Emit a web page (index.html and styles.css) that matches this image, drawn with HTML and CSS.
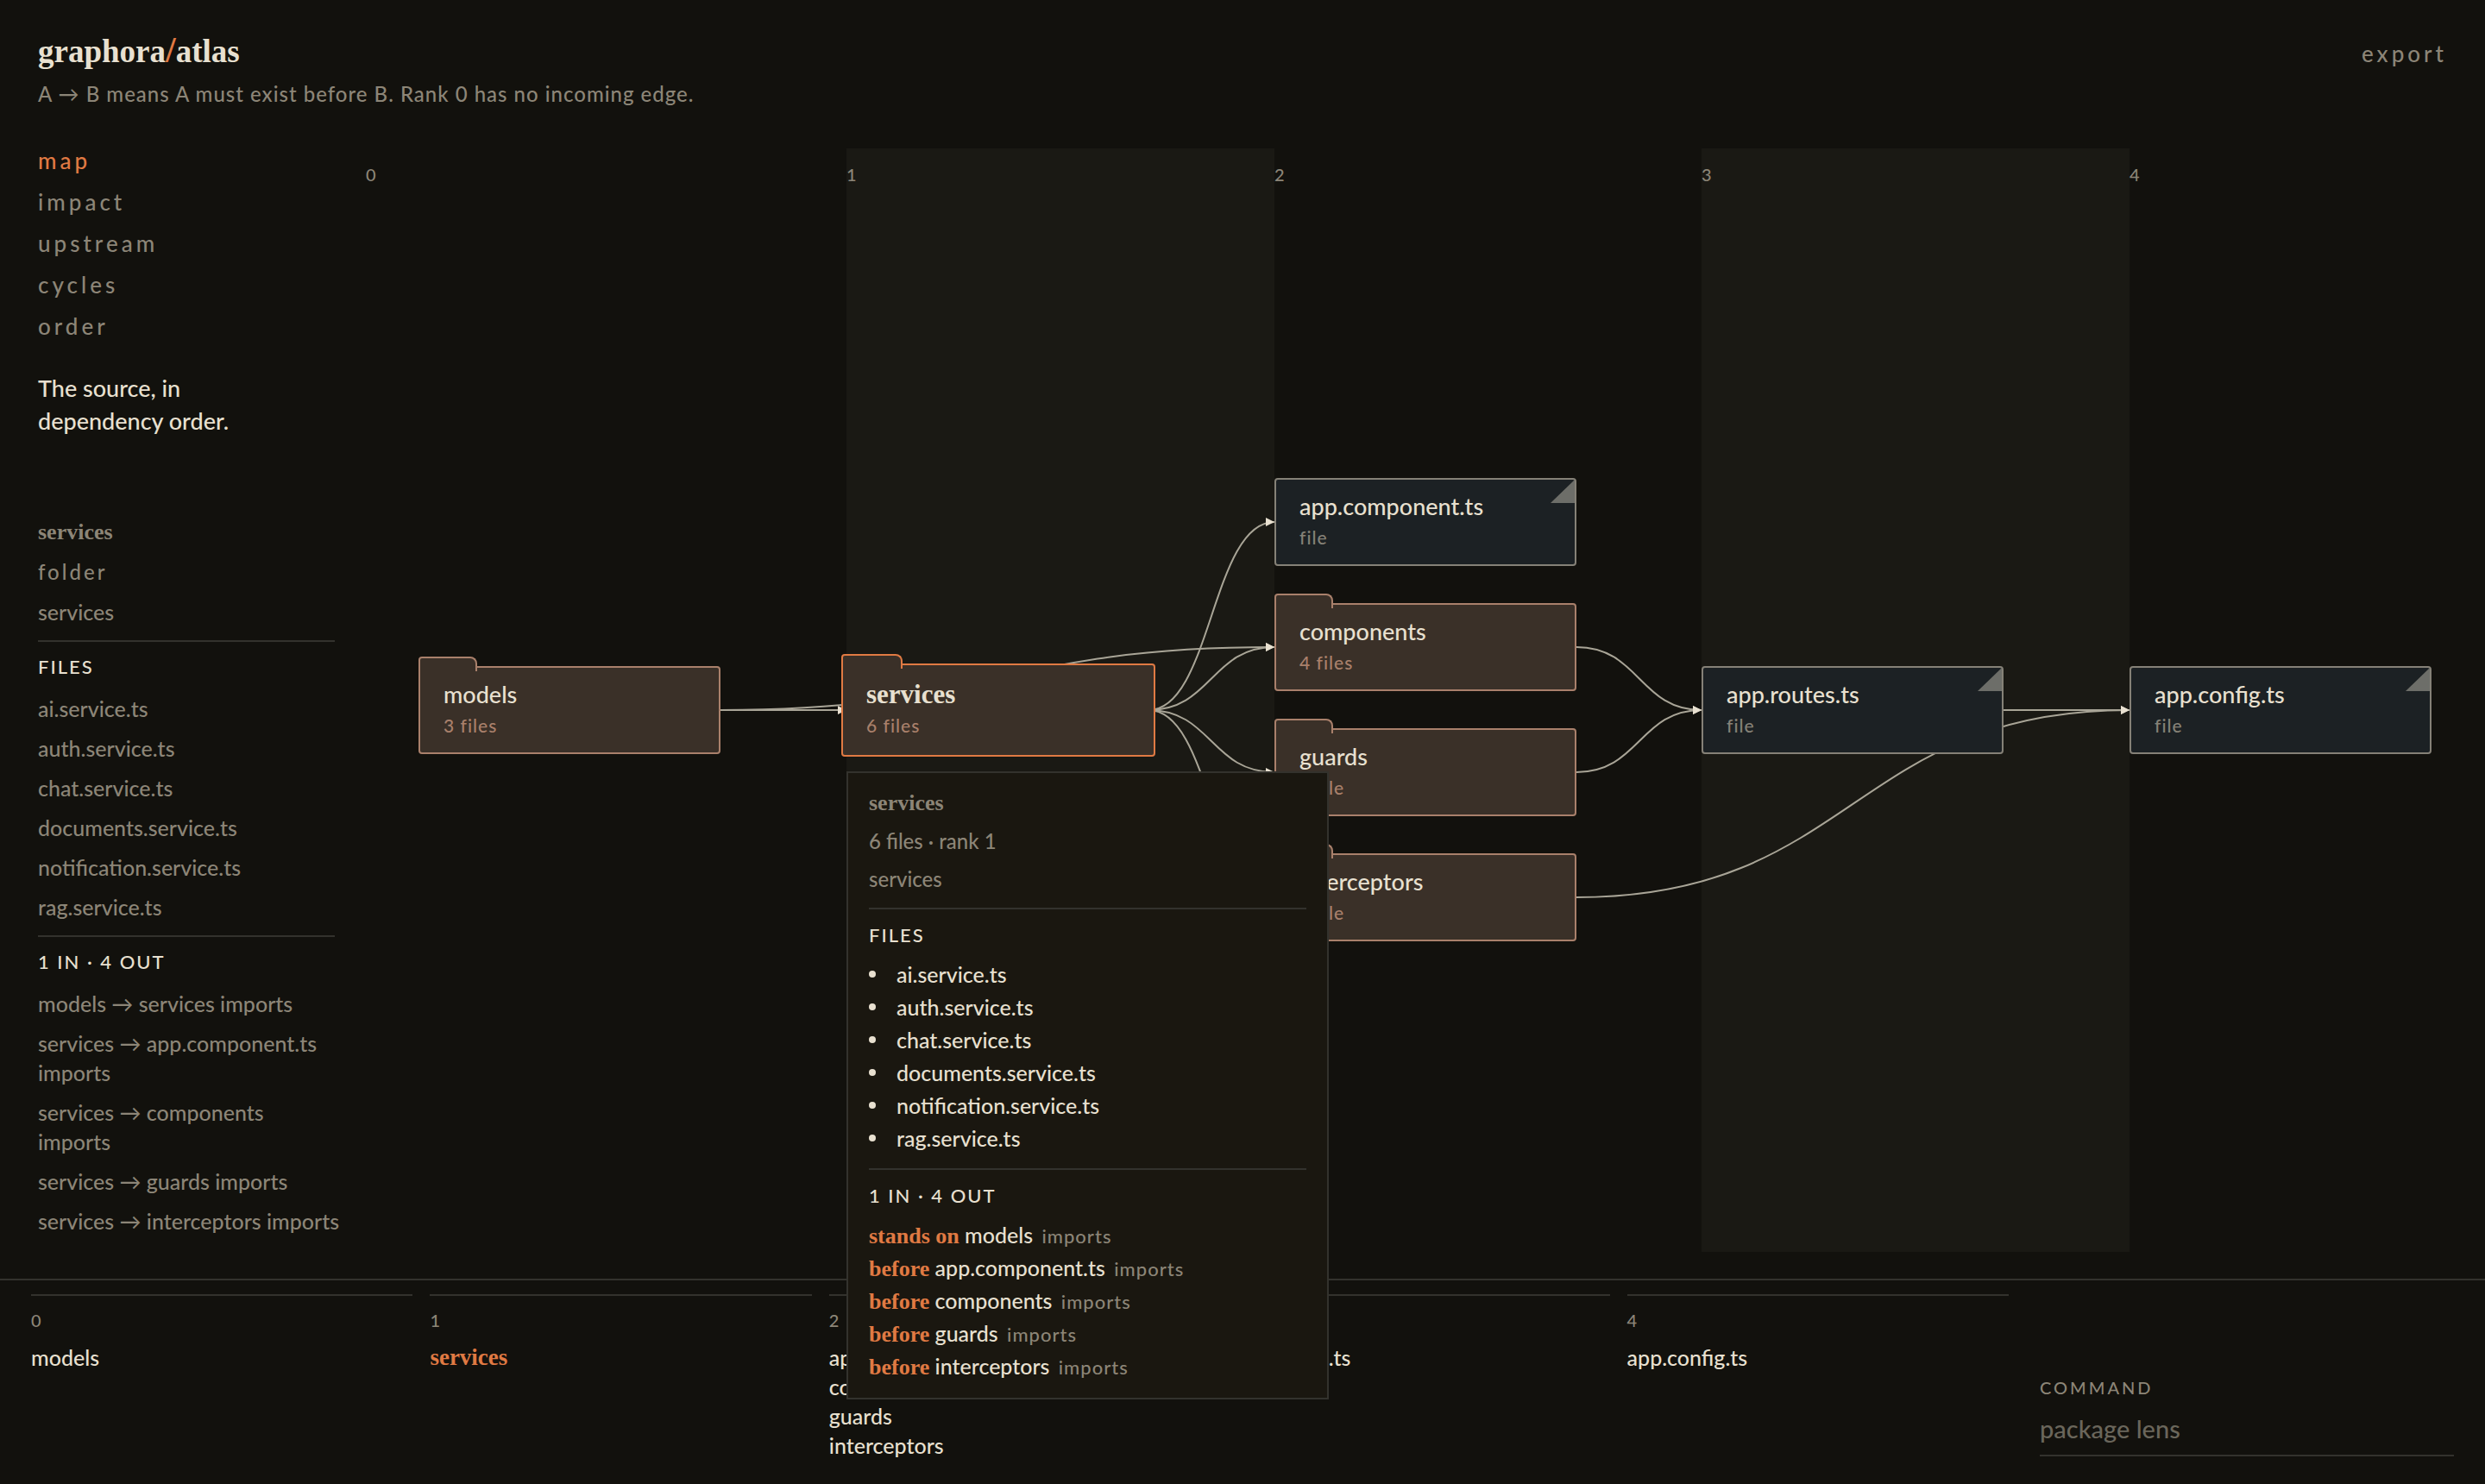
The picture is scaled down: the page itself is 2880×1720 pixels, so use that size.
FILE: index.html
```html
<!DOCTYPE html>
<html lang="en">
<head>
<meta charset="utf-8">
<meta name="viewport" content="width=device-width, initial-scale=1">
<title>graphora/atlas</title>
<link rel="stylesheet" href="styles.css">
</head>
<body>
<header class="header">
  <div>
    <h1 class="logo">graphora<span class="slash">/</span>atlas</h1>
    <p class="tagline">A → B means A must exist before B. Rank 0 has no incoming edge.</p>
  </div>
  <button class="text-button" type="button">export</button>
</header>

<main class="main">
  <aside class="sidebar">
    <nav class="nav">
      <button class="text-button active" type="button">map</button>
      <button class="text-button" type="button">impact</button>
      <button class="text-button" type="button">upstream</button>
      <button class="text-button" type="button">cycles</button>
      <button class="text-button" type="button">order</button>
    </nav>
    <p class="lead">The source, in<br>dependency order.</p>
    <section class="inspector">
      <div class="rows">
        <strong class="serif">services</strong>
        <span class="kind">folder</span>
        <span>services</span>
      </div>
      <div class="group">
        <h2 class="group-title">Files</h2>
        <div class="rows">
          <span>ai.service.ts</span>
          <span>auth.service.ts</span>
          <span>chat.service.ts</span>
          <span>documents.service.ts</span>
          <span>notification.service.ts</span>
          <span>rag.service.ts</span>
        </div>
      </div>
      <div class="group">
        <h2 class="group-title">1 in · 4 out</h2>
        <div class="rows">
          <span>models → services imports</span>
          <span>services → app.component.ts<br>imports</span>
          <span>services → components<br>imports</span>
          <span>services → guards imports</span>
          <span>services → interceptors imports</span>
        </div>
      </div>
    </section>
  </aside>

  <section class="canvas" aria-label="Dependency map">
    <div class="band band-1"></div>
    <div class="band band-3"></div>
    <span class="rank rank-0">0</span>
    <span class="rank rank-1">1</span>
    <span class="rank rank-2">2</span>
    <span class="rank rank-3">3</span>
    <span class="rank rank-4">4</span>

    <svg class="edges" width="2412" height="1279" viewBox="0 0 2412 1279" aria-hidden="true">
      <defs>
        <marker id="arrow" viewBox="0 0 10 10" refX="10" refY="5" markerWidth="10" markerHeight="10" markerUnits="userSpaceOnUse" orient="auto">
          <path class="arrowhead" d="M0 0L10 5L0 10z"/>
        </marker>
      </defs>
      <g class="lines">
        <path d="M411 651H557"/>
        <path d="M411 651C732 651 732 578 1053 578"/>
        <path d="M907 651C980 651 980 433 1053 433"/>
        <path d="M907 651C980 651 980 578 1053 578"/>
        <path d="M907 651C980 651 980 723 1053 723"/>
        <path d="M907 651C980 651 980 868 1053 868"/>
        <path d="M1403 578C1476 578 1476 651 1548 651"/>
        <path d="M1403 723C1476 723 1476 651 1548 651"/>
        <path d="M1403 868C1724 868 1724 651 2044 651"/>
        <path d="M1898 651H2044"/>
      </g>
    </svg>

    <button class="node folder at-models" type="button"><span class="name">models</span><span class="meta">3 files</span></button>
    <button class="node folder selected at-services" type="button"><span class="name">services</span><span class="meta">6 files</span></button>
    <button class="node file at-component" type="button"><span class="name">app.component.ts</span><span class="meta">file</span></button>
    <button class="node folder at-components" type="button"><span class="name">components</span><span class="meta">4 files</span></button>
    <button class="node folder at-guards" type="button"><span class="name">guards</span><span class="meta">1 file</span></button>
    <button class="node folder at-interceptors" type="button"><span class="name">interceptors</span><span class="meta">1 file</span></button>
    <button class="node file at-routes" type="button"><span class="name">app.routes.ts</span><span class="meta">file</span></button>
    <button class="node file at-config" type="button"><span class="name">app.config.ts</span><span class="meta">file</span></button>

    <div class="popover" role="tooltip">
      <div class="rows">
        <strong class="serif">services</strong>
        <span>6 files · rank 1</span>
        <span>services</span>
      </div>
      <div class="group">
        <h2 class="group-title">Files</h2>
        <ul class="files">
          <li>ai.service.ts</li>
          <li>auth.service.ts</li>
          <li>chat.service.ts</li>
          <li>documents.service.ts</li>
          <li>notification.service.ts</li>
          <li>rag.service.ts</li>
        </ul>
      </div>
      <div class="group">
        <h2 class="group-title">1 in · 4 out</h2>
        <ul class="links">
          <li><b class="serif">stands on</b> models <small>imports</small></li>
          <li><b class="serif">before</b> app.component.ts <small>imports</small></li>
          <li><b class="serif">before</b> components <small>imports</small></li>
          <li><b class="serif">before</b> guards <small>imports</small></li>
          <li><b class="serif">before</b> interceptors <small>imports</small></li>
        </ul>
      </div>
    </div>
  </section>
</main>

<footer class="footer">
  <div class="order">
    <div class="step"><span class="step-rank">0</span><span>models</span></div>
    <div class="step"><span class="step-rank">1</span><strong class="serif current">services</strong></div>
    <div class="step"><span class="step-rank">2</span><span>app.component.ts</span><span>components</span><span>guards</span><span>interceptors</span></div>
    <div class="step"><span class="step-rank">3</span><span>app.routes.ts</span></div>
    <div class="step"><span class="step-rank">4</span><span>app.config.ts</span></div>
  </div>
  <div class="command">
    <label class="command-label" for="command">Command</label>
    <input class="command-input" id="command" type="text" placeholder="package lens">
  </div>
</footer>
</body>
</html>
```
FILE: styles.css
```css
:root {
  --bg: #12110d;
  --band: #1a1914;
  --ink: #e8e0d0;
  --muted: #8c8577;
  --accent: #e07a43;
  --line: #33322d;
  --clay: #a9806b;
  --folder: #3a3028;
}

*, *::before, *::after { box-sizing: border-box; }

body {
  margin: 0;
  min-height: 100vh;
  display: flex;
  flex-direction: column;
  background: var(--bg);
  color: var(--ink);
  font: 500 25px/34px Lato, "Noto Sans", sans-serif;
}

h1, h2, p, ul { margin: 0; padding: 0; }

button, input {
  margin: 0;
  padding: 0;
  border: 0;
  background: none;
  color: inherit;
  font: inherit;
}

.serif {
  font-family: "Liberation Serif", serif;
  font-size: 26px;
  font-weight: 700;
}

.header {
  display: flex;
  justify-content: space-between;
  align-items: flex-start;
  padding: 38px 44px 0;
}

.logo {
  font: 700 37px/44px "Liberation Serif", serif;
}

.slash { color: var(--accent); font-size: 42px; line-height: 0; }

.tagline {
  margin-top: 10px;
  color: var(--muted);
  font-size: 24px;
  letter-spacing: 1px;
}

.text-button {
  color: var(--muted);
  font-size: 26px;
  line-height: 48px;
  letter-spacing: 4px;
  text-align: left;
  cursor: pointer;
}

.text-button.active { color: var(--accent); }

.main {
  flex: 1;
  display: grid;
  grid-template-columns: 344px minmax(0, 1fr);
  column-gap: 36px;
  padding: 36px 44px 31px;
}

.nav, .rows { display: flex; flex-direction: column; }

.lead { margin-top: 29px; font-size: 27px; line-height: 38px; }

.inspector { margin-top: 93px; white-space: nowrap; }

.rows { gap: 12px; color: var(--muted); }

.kind { font-size: 24px; letter-spacing: 3px; }

.group {
  margin-top: 16px;
  padding-top: 12px;
  border-top: 2px solid var(--line);
}

.group-title {
  margin-bottom: 14px;
  font-size: 22px;
  font-weight: 500;
  line-height: 34px;
  letter-spacing: 2px;
  text-transform: uppercase;
}

.canvas { position: relative; margin-top: 10px; }

.band {
  position: absolute;
  top: 0;
  bottom: 0;
  width: 496px;
  background: var(--band);
}

.band-1 { left: 557px; }
.band-3 { left: 1548px; }

.rank {
  position: absolute;
  top: 16px;
  color: var(--muted);
  font-size: 20px;
  line-height: 28px;
}

.rank-0 { left: 0; }
.rank-1 { left: 557px; }
.rank-2 { left: 1053px; }
.rank-3 { left: 1548px; }
.rank-4 { left: 2044px; }

.edges {
  position: absolute;
  top: 0;
  left: 0;
}

.lines path {
  fill: none;
  stroke: #a9a597;
  stroke-width: 2;
  marker-end: url(#arrow);
}

.arrowhead { fill: var(--ink); }

.node {
  position: absolute;
  width: 350px;
  height: 102px;
  display: flex;
  flex-direction: column;
  gap: 5px;
  padding: 14px 27px;
  border: 2px solid var(--edge);
  border-radius: 4px;
  text-align: left;
  cursor: pointer;
}

.name { font-size: 27px; line-height: 34px; }

.meta {
  color: var(--edge);
  font-size: 21px;
  line-height: 28px;
  letter-spacing: 1px;
}

.folder { --edge: var(--clay); background: var(--folder); }

.folder::before {
  content: "";
  position: absolute;
  top: -13px;
  left: -2px;
  width: 68px;
  height: 17px;
  border: 2px solid var(--edge);
  border-bottom: 0;
  border-radius: 4px 8px 0 0;
  background: var(--folder);
}

.file { --edge: #858177; background: #1c2124; }

.file::after {
  content: "";
  position: absolute;
  top: 0;
  right: 0;
  width: 28px;
  height: 27px;
  background: #6d6e69;
  clip-path: polygon(100% 0, 100% 100%, 0 100%);
}

.selected {
  width: 364px;
  height: 108px;
  padding-top: 17px;
  border-color: var(--accent);
}

.selected::before { width: 71px; border-color: var(--accent); }

.selected .name {
  font-family: "Liberation Serif", serif;
  font-size: 31px;
  font-weight: 700;
}

.selected .meta { color: var(--clay); }

.at-models { left: 61px; top: 600px; }
.at-services { left: 551px; top: 597px; }
.at-component { left: 1053px; top: 382px; }
.at-components { left: 1053px; top: 527px; }
.at-guards { left: 1053px; top: 672px; }
.at-interceptors { left: 1053px; top: 817px; }
.at-routes { left: 1548px; top: 600px; }
.at-config { left: 2044px; top: 600px; }

.popover {
  position: absolute;
  z-index: 2;
  left: 557px;
  top: 722px;
  width: 559px;
  padding: 18px 24px 18px;
  border: 2px solid var(--line);
  background: #1a1710;
}

.popover .rows { gap: 10px; font-size: 24px; }

.popover .group { margin-top: 16px; padding-top: 13px; }

.popover .group-title { margin-bottom: 9px; }

.popover li { line-height: 38px; }

.files, .links { list-style: none; }

.files li { display: flex; align-items: center; gap: 24px; }

.files li::before {
  content: "";
  width: 8px;
  height: 8px;
  border-radius: 50%;
  background: var(--ink);
}

.links .serif { color: var(--accent); line-height: 1; }

.links small {
  margin-left: 4px;
  color: var(--muted);
  font-size: 22px;
  line-height: 1;
  letter-spacing: 1px;
}

.footer {
  display: grid;
  grid-template-columns: minmax(0, 1fr) 480px;
  column-gap: 36px;
  padding: 16px 36px 28px;
  border-top: 2px solid var(--line);
}

.order {
  display: grid;
  grid-template-columns: repeat(5, minmax(0, 1fr));
  column-gap: 20px;
}

.step {
  display: flex;
  flex-direction: column;
  padding-top: 14px;
  border-top: 2px solid var(--line);
}

.step-rank {
  margin-bottom: 12px;
  color: var(--muted);
  font-size: 20px;
  line-height: 28px;
}

.current { color: var(--accent); font-size: 27px; }

.command {
  align-self: end;
  display: flex;
  flex-direction: column;
  gap: 12px;
  padding-bottom: 4px;
}

.command-label {
  color: var(--muted);
  font-size: 20px;
  line-height: 28px;
  letter-spacing: 3px;
  text-transform: uppercase;
}

.command-input {
  width: 100%;
  height: 54px;
  padding-bottom: 10px;
  border-bottom: 2px solid var(--line);
  border-radius: 0;
  font-size: 29px;
  outline: none;
}

.command-input::placeholder { color: #6a665b; opacity: 1; }
```
